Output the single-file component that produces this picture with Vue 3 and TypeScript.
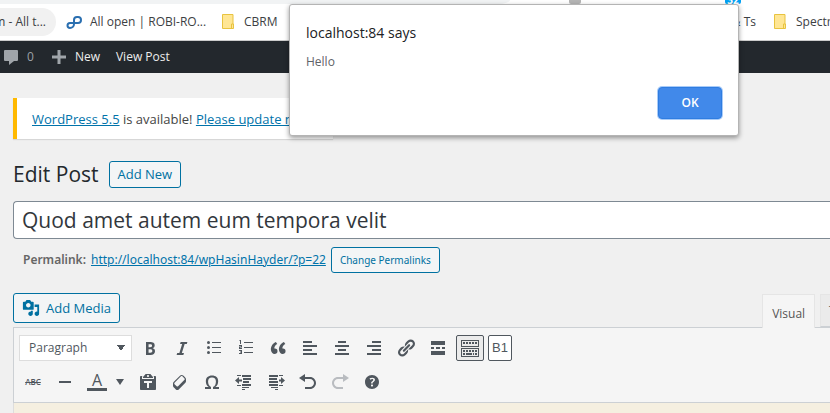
<script setup lang="ts">
interface Tool {
  name: string
  path?: string
  text?: string
  kind?: string
}

const firstRow: Tool[] = [
  { name: 'Bold', path: 'M6 4v13h4.54c1.37 0 2.46-.33 3.26-1 .8-.66 1.2-1.58 1.2-2.77 0-.84-.17-1.51-.51-2.01s-.9-.85-1.67-1.03v-.09c.57-.1 1.02-.4 1.36-.9s.51-1.13.51-1.91c0-1.14-.39-1.98-1.17-2.5C12.75 4.26 11.5 4 9.78 4H6zm2.57 5.15V6.26h1.36c.73 0 1.27.11 1.61.32.34.22.51.58.51 1.07 0 .54-.16.92-.47 1.15s-.82.35-1.51.35h-1.5zm0 2.19h1.6c1.44 0 2.16.53 2.16 1.61 0 .6-.17 1.05-.51 1.34s-.86.43-1.57.43H8.57v-3.38z' },
  { name: 'Italic', path: 'M14.78 6h-2.13l-2.8 9h2.12l-.62 2H4.6l.62-2h2.14l2.8-9H8.03l.62-2h6.75z' },
  { name: 'Bulleted list', path: 'M4.500 3a1.500 1.500 0 1 1 0 3 1.500 1.500 0 0 1 0-3zM4.500 8a1.500 1.500 0 1 1 0 3 1.500 1.500 0 0 1 0-3zM4.500 13a1.500 1.500 0 1 1 0 3 1.500 1.500 0 0 1 0-3zM8 4h9v1H8zM8 9h9v1H8zM8 14h9v1H8z' },
  { name: 'Numbered list', path: 'M4 2h1v4H4V3H3zM3 7h3v2.500H4V10h2v1H3V8.500h2V8H3zM3 12h3v4H3v-1h2v-.5H4v-1h1V13H3zM8 4h9v1H8zM8 9h9v1H8zM8 14h9v1H8z' },
  { name: 'Blockquote', path: 'M9.49 13.22c0-.74-.2-1.38-.61-1.9-.62-.78-1.83-.88-2.53-.72-.29-1.65 1.11-3.75 2.92-4.65L7.88 4c-2.73 1.3-5.42 4.28-4.96 8.05C3.21 14.43 4.59 16 6.54 16c.85 0 1.56-.25 2.12-.75s.83-1.18.83-2.03zm8.05 0c0-.74-.2-1.38-.61-1.9-.63-.78-1.83-.88-2.53-.72-.29-1.65 1.11-3.75 2.92-4.65L15.93 4c-2.73 1.3-5.41 4.28-4.95 8.05.29 2.38 1.66 3.95 3.61 3.95.85 0 1.56-.25 2.12-.75s.83-1.18.83-2.03z' },
  { name: 'Align left', path: 'M3 3h9v2H3zM3 7h14v2H3zM3 11h9v2H3zM3 15h14v2H3z' },
  { name: 'Align center', path: 'M6 3h8v2H6zM3 7h14v2H3zM6 11h8v2H6zM3 15h14v2H3z' },
  { name: 'Align right', path: 'M8 3h9v2H8zM3 7h14v2H3zM8 11h9v2H8zM3 15h14v2H3z' },
  { name: 'Insert link', path: 'M17.74 2.76c1.68 1.69 1.68 4.41 0 6.1l-1.53 1.52c-1.12 1.12-2.7 1.47-4.14 1.09l2.62-2.61.76-.77.76-.76c.84-.84.84-2.2 0-3.04-.84-.85-2.2-.85-3.04 0l-.77.76-3.38 3.38c-.37-1.44-.02-3.02 1.1-4.14l1.52-1.53c1.69-1.68 4.42-1.68 6.1 0zM8.59 13.43l5.34-5.34c.42-.42.42-1.1 0-1.52-.44-.43-1.13-.39-1.53 0l-5.33 5.34c-.42.42-.42 1.1 0 1.52.44.43 1.13.39 1.52 0zm-.76 2.29l4.14-4.15c.38 1.44.03 3.02-1.09 4.14l-1.52 1.53c-1.69 1.68-4.41 1.68-6.1 0-1.68-1.68-1.68-4.42 0-6.1l1.53-1.52c1.12-1.12 2.7-1.47 4.14-1.1l-4.14 4.15c-.85.84-.85 2.2 0 3.05.84.84 2.2.84 3.04 0z' },
  { name: 'Read more', path: 'M3 3h14v4H3zM3 9h3v2H3zM8 9h4v2H8zM14 9h3v2h-3zM3 13h14v4H3z' },
  { name: 'Toolbar toggle', kind: 'active', path: 'M1 2h18v7H1zM2 3v5h16V3zM3 4h2v2H3zM6 4h2v2H6zM9 4h2v2H9zM12 4h2v2h-2zM15 4h2v2h-2zM1 10h18v9H1zM2 11v7h16v-7zM3 12h2v2H3zM6 12h2v2H6zM9 12h2v2H9zM12 12h2v2h-2zM15 12h2v2h-2zM3 15h2v2H3zM6 15h6v2H6zM13 15h1v2h-1zM15 15h2v2h-2z' },
  { name: 'B1', text: 'B1', kind: 'boxed' },
]

const secondRow: Tool[] = [
  { name: 'Paste as text', path: 'M12.38 2L15 5v1H5V5l2.64-3h4.74zM10 5c.55 0 1-.44 1-1 0-.55-.45-1-1-1s-1 .45-1 1c0 .56.45 1 1 1zm5.45-1H17c.55 0 1 .45 1 1v12c0 .56-.45 1-1 1H3c-.55 0-1-.44-1-1V5c0-.55.45-1 1-1h1.55L4 4.63V7h12V4.63zM14 11V9H6v2h3v5h2v-5h3z' },
  { name: 'Clear formatting', path: 'M14.29 4.59l1.1 1.11c.41.4.61.94.61 1.47v2.12c0 .53-.2 1.07-.61 1.47l-6.63 6.63c-.4.41-.94.61-1.47.61s-1.07-.2-1.47-.61l-1.11-1.1-1.1-1.11c-.41-.4-.61-.94-.61-1.47v-2.12c0-.54.2-1.07.61-1.48l6.63-6.62c.4-.41.94-.61 1.47-.61s1.06.2 1.47.61zm-6.21 9.7l6.42-6.42c.39-.39.39-1.03 0-1.43L12.36 4.3c-.19-.19-.45-.29-.72-.29s-.52.1-.71.29l-6.42 6.42c-.39.4-.39 1.04 0 1.43l2.14 2.14c.38.38 1.04.38 1.43 0z' },
  { name: 'Special character', path: 'M10 5.4c1.27 0 2.24.36 2.91 1.08.66.71 1 1.76 1 3.13 0 1.28-.23 2.37-.69 3.27-.47.89-1.27 1.52-2.22 2.12v2h6v-2h-3.69c.92-.64 1.62-1.34 2.12-2.34.49-1.01.74-2.13.74-3.35 0-1.78-.55-3.19-1.65-4.22S11.92 3.54 10 3.54s-3.43.53-4.52 1.57c-1.1 1.04-1.65 2.44-1.65 4.2 0 1.21.24 2.31.73 3.33.48 1.01 1.19 1.71 2.1 2.36H3v2h6v-2c-.98-.64-1.8-1.28-2.24-2.17-.45-.89-.67-1.96-.67-3.22 0-1.37.33-2.41 1-3.13C7.75 5.76 8.72 5.4 10 5.4z' },
  { name: 'Decrease indent', path: 'M1 8.500l4-3.500v2.500h3v2H5V12zM3 3h4v1H3zM8 3h9v2H8zM9 6h8v2H9zM9 9h6v2H9zM8 12h9v2H8zM3 13h4v1H3zM8 15h7v1H8zM8 17h3v1H8z' },
  { name: 'Increase indent', path: 'M19 8.500l-4-3.500v2.500h-2v2h2V12zM3 3h9v2H3zM13 3h4v1h-4zM3 6h8v2H3zM3 9h9v2H3zM3 12h9v2H3zM13 13h4v1h-4zM5 15h7v1H5zM9 17h3v1H9z' },
  { name: 'Undo', path: 'M12 5H7V2L1 6l6 4V7h5c2.2 0 4 1.8 4 4s-1.8 4-4 4H7v2h5c3.3 0 6-2.7 6-6s-2.7-6-6-6z' },
  { name: 'Redo', kind: 'disabled', path: 'M8 5h5V2l6 4-6 4V7H8c-2.2 0-4 1.8-4 4s1.8 4 4 4h5v2H8c-3.300 0-6-2.700-6-6s2.700-6 6-6z' },
  { name: 'Keyboard shortcuts', path: 'M17 10c0-3.87-3.14-7-7-7-3.87 0-7 3.13-7 7s3.13 7 7 7c3.86 0 7-3.13 7-7zm-6.3 1.48H9.14v-.43c0-.38.08-.7.24-.98s.46-.57.88-.89c.41-.29.68-.53.81-.71.14-.18.2-.39.2-.62 0-.25-.09-.44-.28-.58-.19-.13-.45-.19-.79-.19-.58 0-1.25.19-2 .57l-.64-1.28c.87-.49 1.8-.74 2.77-.74.81 0 1.45.2 1.92.58.48.39.71.91.71 1.55 0 .43-.09.8-.29 1.11-.19.32-.57.67-1.11 1.06-.38.28-.61.49-.71.63-.1.15-.15.34-.15.57v.35zm-1.47 2.74c-.18-.17-.27-.42-.27-.73 0-.33.08-.58.26-.75s.43-.25.77-.25c.32 0 .57.09.75.26s.27.42.27.74c0 .3-.09.55-.27.72-.18.18-.43.27-.75.27-.33 0-.58-.09-.76-.26z' },
]
</script>

<template>
  <div class="window">
    <div class="omnibox-row">
      <span class="omnibox"></span>
      <span class="ext grey"></span>
      <span class="ext blue">32</span>
    </div>
    <nav class="bookmarks" aria-label="Bookmarks">
      <a href="#" class="pill">m - All t...</a>
      <a href="#" class="mark jira">
        <svg width="16" height="16" viewBox="0 0 16 16" fill="none" stroke="#2a6fb0" stroke-width="2">
          <path d="M8 9V6a3 3 0 0 1 3-3h1a3 3 0 0 1 0 6H4a2.500 2.500 0 0 0 0 5a4 4 0 0 0 4-4z" />
        </svg>
        All open | ROBI-RO...
      </a>
      <a href="#" class="mark cbrm">
        <svg width="12" height="15" viewBox="0 0 12 15" fill="#ffe694" stroke="#e8c33f"><path d="M.5.500h10.500v9.500h.500v4.500H.500zM9.500 14v-4h1.500" /></svg>
        CBRM
      </a>
      <a href="#" class="mark ts">&amp; Ts</a>
      <a href="#" class="mark">
        <svg width="12" height="15" viewBox="0 0 12 15" fill="#ffe694" stroke="#e8c33f"><path d="M.5.500h10.500v9.500h.500v4.500H.500zM9.500 14v-4h1.500" /></svg>
        Spectrum
      </a>
    </nav>

    <nav class="adminbar" aria-label="Toolbar">
      <a href="#" class="count">
        <svg width="20" height="20" viewBox="0 0 20 20"><path d="M4 3h12a1 1 0 0 1 1 1v9a1 1 0 0 1-1 1h-3l-5 4v-4H4a1 1 0 0 1-1-1V4a1 1 0 0 1 1-1z" /></svg>
        0
      </a>
      <a href="#" class="new">
        <svg width="14" height="14" viewBox="0 0 14 14"><path d="M5.500 0h3v5.500H14v3H8.500V14h-3V8.500H0v-3h5.500z" /></svg>
        New
      </a>
      <a href="#">View Post</a>
    </nav>

    <main class="content">
      <p class="notice"><a href="#">WordPress 5.5</a> is available! <a href="#">Please update now</a>.</p>

      <header class="heading">
        <h1>Edit Post</h1>
        <button type="button" class="btn">Add New</button>
      </header>

      <input class="title" type="text" aria-label="Post title" value="Quod amet autem eum tempora velit" />

      <div class="permalink">
        <strong>Permalink:</strong>
        <a href="#">http://localhost:84/wpHasinHayder/?p=22</a>
        <button type="button" class="btn small">Change Permalinks</button>
      </div>

      <section class="editor">
        <div class="editor-top">
          <button type="button" class="btn media">
            <svg width="18" height="18" viewBox="0 0 20 20"><path d="M13 11V4c0-.55-.45-1-1-1h-1.67L9 1H5L3.670 3H2c-.55 0-1 .45-1 1v7c0 .55.45 1 1 1h10c.55 0 1-.45 1-1zM7 4.500c1.380 0 2.500 1.120 2.500 2.500S8.380 9.500 7 9.500 4.500 8.380 4.500 7 5.620 4.500 7 4.500zM14 6h5v10.500c0 1.380-1.120 2.500-2.500 2.500S14 17.880 14 16.500s1.120-2.500 2.500-2.500c.17 0 .34.02.5.05V9h-3V6zm-4 8.050V13h2v3.500c0 1.380-1.120 2.500-2.500 2.500S7 17.880 7 16.500 8.120 14 9.500 14c.17 0 .34.02.5.05z" /></svg>
            Add Media
          </button>
          <div class="tabs">
            <button type="button" class="tab current">Visual</button>
            <button type="button" class="tab">Text</button>
          </div>
        </div>
        <div class="toolbar">
          <div class="tools">
            <select aria-label="Format"><option>Paragraph</option></select>
            <button v-for="t in firstRow" :key="t.name" type="button" class="tool" :class="t.kind" :aria-label="t.name">
              <svg v-if="t.path" width="20" height="20" viewBox="0 0 20 20"><path fill-rule="evenodd" :d="t.path" /></svg>
              <template v-else>{{ t.text }}</template>
            </button>
          </div>
          <div class="tools">
            <button type="button" class="tool strike" aria-label="Strikethrough"><s>ABC</s></button>
            <button type="button" class="tool" aria-label="Horizontal line">
              <svg width="20" height="20" viewBox="0 0 20 20"><path d="M4 9h12v2H4z" /></svg>
            </button>
            <div class="split">
              <button type="button" class="tool colour" aria-label="Text color"><span>A</span></button>
              <button type="button" class="arrow" aria-label="More text colors">
                <svg width="8" height="6" viewBox="0 0 8 6"><path d="M0 0h8L4 6z" /></svg>
              </button>
            </div>
            <button v-for="t in secondRow" :key="t.name" type="button" class="tool" :class="t.kind" :disabled="t.kind === 'disabled'" :aria-label="t.name">
              <svg width="20" height="20" viewBox="0 0 20 20"><path fill-rule="evenodd" :d="t.path" /></svg>
            </button>
          </div>
        </div>
        <div class="canvas"></div>
      </section>
    </main>

    <div class="dialog" role="alertdialog" aria-labelledby="dialog-title">
      <h2 id="dialog-title">localhost:84 says</h2>
      <p>Hello</p>
      <button type="button" class="ok">OK</button>
    </div>
  </div>
</template>

<style>
body {
  background: #f0f0f0;
  overflow: hidden;
}
</style>

<style scoped>
.window {
  position: relative;
  display: flex;
  flex-direction: column;
  min-height: 100vh;
  overflow: hidden;
  box-sizing: border-box;
  font: 12px/20px "Segoe UI", "Open Sans", sans-serif;
  color: #444;
}
.window *,
.window *::before {
  box-sizing: border-box;
}
button,
input,
select {
  font: inherit;
  margin: 0;
}
h1,
h2,
p {
  margin: 0;
  font-weight: 400;
}
svg {
  flex: none;
}
.omnibox-row {
  display: flex;
  height: 4px;
  background: #fff;
  overflow: hidden;
}
.omnibox {
  width: 510px;
  background: #f1f3f4;
  border-bottom-right-radius: 12px 4px;
}
.ext {
  width: 12px;
  margin-left: 59px;
  background: #b5b5b5;
  border-radius: 0 0 2px 2px;
}
.ext.blue {
  width: 16px;
  margin-left: 144px;
  background: #03a1f3;
  color: #fff;
  font-size: 10px;
  font-weight: 700;
  line-height: 0;
  text-align: center;
}
.bookmarks {
  display: flex;
  align-items: center;
  height: 37px;
  padding-bottom: 1px;
  background: #fff;
  border-bottom: 1px solid #ccc;
  white-space: nowrap;
}
.bookmarks a {
  display: flex;
  align-items: center;
  flex: none;
  color: #3c4043;
  text-decoration: none;
}
.bookmarks .pill {
  justify-content: flex-end;
  width: 56px;
  height: 28px;
  padding-right: 10px;
  background: #f1f1f1;
  border-radius: 0 14px 14px 0;
}
.bookmarks .mark {
  gap: 10px;
}
.bookmarks .jira {
  width: 156px;
  margin-left: 10px;
  gap: 8px;
}
.bookmarks .cbrm {
  width: 420px;
}
.bookmarks .ts {
  justify-content: flex-end;
  width: 114px;
  margin-right: 18px;
}
.adminbar {
  display: flex;
  align-items: center;
  gap: 16px;
  height: 32px;
  padding-left: 1px;
  background: #23282d;
  font-weight: 500;
}
.adminbar a {
  display: flex;
  align-items: center;
  color: #eee;
  text-decoration: none;
}
.adminbar svg {
  fill: #a0a5aa;
}
.adminbar .count {
  gap: 6px;
  color: #9ca1a6;
  font-weight: 400;
}
.adminbar .new {
  gap: 9px;
  margin-left: 2px;
}
.content {
  display: flex;
  flex-direction: column;
  flex: 1;
  padding: 25px 0 0 13px;
}
.content a {
  color: #0073aa;
}
.notice {
  width: 320px;
  padding: 11px 12px 10px 15px;
  background: #fff;
  border-left: 4px solid #ffb900;
  box-shadow: 0 1px 1px rgba(0, 0, 0, 0.1);
  font-size: 13px;
  white-space: nowrap;
}
.heading {
  display: flex;
  align-items: center;
  gap: 10px;
  margin-top: 21px;
}
.heading h1 {
  font-size: 21px;
  line-height: 28px;
  color: #23282d;
}
.btn {
  height: 27px;
  padding: 0 8px;
  background: #f3f5f6;
  border: 1px solid #0071a1;
  border-radius: 3px;
  color: #0071a1;
  font-size: 13px;
  white-space: nowrap;
}
.title {
  height: 38px;
  margin-top: 13px;
  padding: 0 8px;
  background: #fff;
  border: 1px solid #7e8993;
  border-right: 0;
  border-radius: 4px 0 0 4px;
  color: #32373c;
  font-size: 21px;
}
.permalink {
  display: flex;
  align-items: center;
  gap: 5px;
  margin-top: 8px;
  padding-left: 10px;
  font-family: "Segoe UI", "Noto Sans", sans-serif;
}
.permalink strong {
  font-weight: 600;
  color: #666;
}
.btn.small {
  height: 26px;
  font-size: 10px;
}
.editor {
  display: flex;
  flex-direction: column;
  flex: 1;
  margin-top: 20px;
}
.editor-top {
  display: flex;
  justify-content: space-between;
  height: 34px;
}
.btn.media {
  display: flex;
  align-items: center;
  gap: 6px;
  height: 30px;
}
.btn svg {
  fill: #0071a1;
}
.tabs {
  display: flex;
  gap: 5px;
  margin: 1px -32px 0 0;
}
.tab {
  height: 33px;
  padding: 0 8px;
  background: #ebebeb;
  border: 1px solid #e5e5e5;
  border-bottom-color: #ccd0d4;
  color: #666;
}
.tab.current {
  height: 34px;
  padding: 4px 9px 0;
  background: #f5f5f5;
  border-bottom: 0;
  color: #555;
  z-index: 1;
}
.toolbar {
  display: flex;
  flex-direction: column;
  gap: 8px;
  padding: 7px 5px;
  background: #f5f5f5;
  border: solid #ccd0d4;
  border-width: 1px 0 1px 1px;
}
.tools {
  display: flex;
  align-items: center;
  gap: 4px;
  height: 26px;
}
.tools select {
  appearance: none;
  width: 113px;
  height: 26px;
  padding: 0 9px;
  border: 1px solid #ddd;
  border-radius: 0;
  color: #50575e;
  background: linear-gradient(to top right, transparent 50%, #50575e 50%) 97px 9px / 4px 6px no-repeat,
    linear-gradient(to top left, transparent 50%, #50575e 50%) 101px 9px / 4px 6px no-repeat, #fff;
}
.tool {
  display: flex;
  align-items: center;
  justify-content: center;
  flex: none;
  width: 28px;
  height: 26px;
  padding: 0;
  background: none;
  border: 0;
  border-radius: 2px;
  color: #50575e;
}
.tool svg,
.arrow svg {
  fill: #50575e;
}
.tool.active {
  background: #ebebeb;
  border: 1px solid #50575e;
}
.tool.boxed {
  width: 24px;
  background: #fff;
  border: 1px solid #50575e;
  font-family: "Liberation Sans", Arial, sans-serif;
  font-size: 13px;
}
.tool.disabled svg {
  fill: #b9bcc0;
}
.tool.strike {
  font-size: 8px;
  font-weight: 600;
}
.split {
  display: flex;
}
.colour span {
  width: 20px;
  height: 18px;
  border-bottom: 3px solid #50575e;
  font-size: 16px;
  line-height: 14px;
}
.arrow {
  display: flex;
  align-items: center;
  justify-content: center;
  width: 18px;
  height: 26px;
  margin-right: 1px;
  padding: 0;
  background: none;
  border: 0;
}
.canvas {
  flex: 1;
  min-height: 10px;
  border-left: 1px solid #ddd;
  background: #f5efe0;
}
.dialog {
  position: absolute;
  top: 4px;
  left: 50%;
  display: flex;
  flex-direction: column;
  width: 450px;
  margin-left: -126px;
  padding: 17px 16px 16px;
  background: #fff;
  border: 1px solid #b4b4b4;
  border-radius: 3px;
  box-shadow: 0 2px 5px rgba(0, 0, 0, 0.4);
}
.dialog h2 {
  font-size: 14px;
  line-height: 22px;
  color: #202124;
}
.dialog p {
  margin-top: 8px;
  color: #5f6368;
}
.ok {
  align-self: flex-end;
  width: 64px;
  height: 32px;
  margin-top: 15px;
  background: #4189ea;
  border: 1px solid #2f7de1;
  border-radius: 4px;
  box-shadow: 0 0 0 1px #a9cbf8;
  color: #fff;
  font-weight: 600;
}
</style>
